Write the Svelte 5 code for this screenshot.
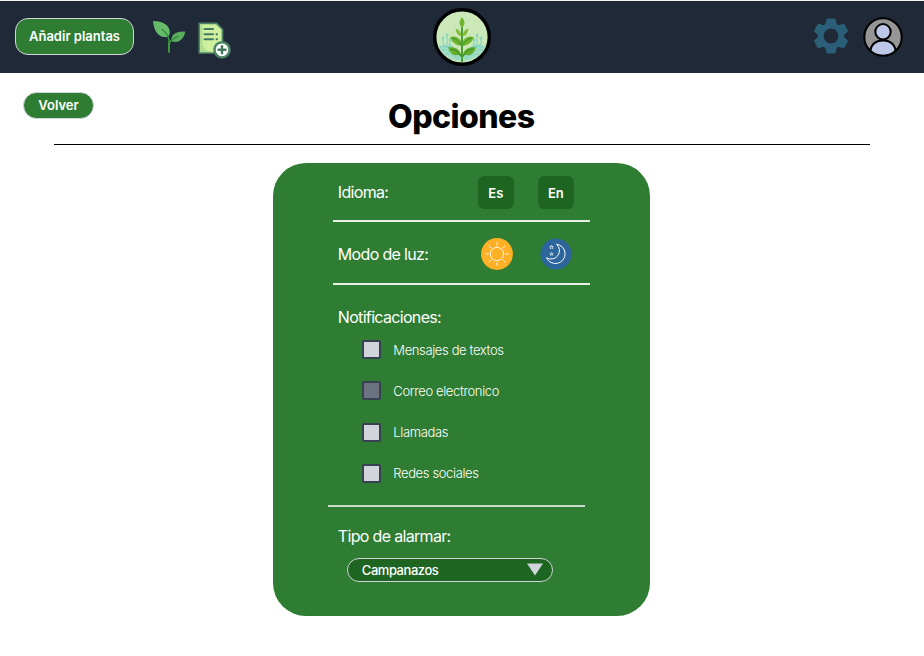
<script>
  let language = $state('es');
  let alarm = $state('Campanazos');
  let channels = $state([
    { name: 'Mensajes de textos', active: false },
    { name: 'Correo electronico', active: true },
    { name: 'Llamadas', active: false },
    { name: 'Redes sociales', active: false }
  ]);
  const rays = [0, 45, 90, 135, 180, 225, 270, 315];
  const teeth = [0, 60, 120, 180, 240, 300];
</script>

<div class="page">
  <header>
    <button class="add">Añadir plantas</button>
    <svg class="sprout" width="34" height="34" viewBox="152 20 34 34">
      <path d="M153 21C163 21 169.500 25 169.800 32Q170 35 167.500 37C160 38 154 33 153 21Z" fill="#66bb6a" />
      <path d="M171.500 41C171 35 175 31 185.300 31.500C184 39 179 43.500 172 41.500Z" fill="#5bad60" />
      <path d="M162 29.500Q168.500 34 169 41V52M169.200 45Q169 40 178 36.500" fill="none" stroke="#388e3c" stroke-width="1.500" stroke-linecap="round" />
      <path d="M169 43V52" stroke="#43a047" stroke-width="1.600" stroke-linecap="round" />
    </svg>
    <svg class="document" width="34" height="38" viewBox="198 22 34 38">
      <path d="M199.300 23.300H216.500L222.500 29.500V53H199.300Z" fill="#cff09e" stroke="#4d8465" stroke-width="1.700" stroke-linejoin="round" />
      <path d="M200.300 24.300H202.500V44Q203 50 211 52H200.300Z" fill="#aedb8d" />
      <path d="M204.500 29H213M204.500 34.300H213M204.500 39.300H213M216.500 34.300H217M216.500 39.300H217" stroke="#3f7863" stroke-width="2" stroke-linecap="round" />
      <circle cx="222" cy="49.800" r="7.600" fill="#fff" stroke="#4d8465" stroke-width="2.500" />
      <path d="M222 46.300V53.300M218.500 49.800H225.500" stroke="#427a60" stroke-width="2.500" stroke-linecap="round" />
    </svg>
    <svg class="logo" width="60" height="60" viewBox="0 0 60 60">
      <circle cx="30" cy="30" r="27.300" fill="#cce8b8" stroke="#000" stroke-width="3.400" />
      <path d="M6 39Q18 34 29 48L30 54Q12 53 6 39ZM54 39Q42 34 31 48L30 54Q48 53 54 39Z" fill="#a4ddc4" />
      <g fill="none" stroke="#64cbc0" stroke-width=".8">
        <path d="M11 32V37L23 44M15 29V37L26 46M18 34V38L27 45M49 32V37L37 44M45 29V37L34 46M42 34V38L33 45" />
        <path d="M8 40Q20 38 28 50M9 43Q20 42 27 52M14 47Q21 46 26 53M52 40Q40 38 32 50M51 43Q40 42 33 52M46 47Q39 46 34 53" stroke-dasharray="1.600 .7" />
        <circle cx="11" cy="31" r="1" /><circle cx="15" cy="28" r="1" /><circle cx="18" cy="33" r="1" />
        <circle cx="49" cy="31" r="1" /><circle cx="45" cy="28" r="1" /><circle cx="42" cy="33" r="1" />
      </g>
      <path d="M30 20V55" stroke="#44992c" stroke-width="1.900" />
      <path d="M30 10Q35 16 30 21Q25 16 30 10Z" fill="#70b62c" />
      <path d="M29.500 29.500Q24 28 23.500 21.500Q29 23 29.500 29.500ZM30.500 29.500Q36 28 36.500 21.500Q31 23 30.500 29.500Z" fill="#86bd36" />
      <path d="M29.500 38.500C25 39 20 36 18 30C25 28 30 32 29.500 38.500ZM30.500 38.500C35 39 40 36 42 30C35 28 30 32 30.500 38.500Z" fill="#70b62c" />
      <path d="M29.500 52C28 45 25 50 21 47.500Q18 46 16 40.500C24 39 30 43 29.500 52ZM30.500 52C32 45 35 50 39 47.500Q42 46 44 40.500C36 39 30 43 30.500 52Z" fill="#63ad27" />
      <path d="M20 31Q26 32 29.500 38.500M40 31Q34 32 30.500 38.500M19 42Q26 43 29.500 50M41 42Q34 43 30.500 50" fill="none" stroke="#328932" stroke-width="1" />
    </svg>
    <svg class="gear" width="36" height="36" viewBox="-18 -18 36 36">
      <g fill="#2b5f78">
        {#each teeth as angle}
          <path d="M-5.800-11L-4.600-16.500Q-4.400-17.400-3.400-17.400H3.400Q4.400-17.400 4.600-16.500L5.800-11Z" transform={`rotate(${angle})`} />
        {/each}
      </g>
      <circle r="10.300" fill="none" stroke="#2b5f78" stroke-width="5.800" />
    </svg>
    <svg class="avatar" width="40" height="40" viewBox="0 0 40 40">
      <defs><clipPath id="avatar-disc"><circle cx="20" cy="20" r="18.500" /></clipPath></defs>
      <circle cx="20" cy="20" r="18.500" fill="#969696" />
      <g clip-path="url(#avatar-disc)" fill="#bdc7e7" stroke="#000" stroke-width="2">
        <circle cx="20" cy="14.800" r="7.700" />
        <path d="M7 36Q8 23.500 20 23.500T33 36V42H7Z" />
      </g>
      <circle cx="20" cy="20" r="18.700" fill="none" stroke="#000" stroke-width="2" />
    </svg>
  </header>

  <div class="heading">
    <button class="back">Volver</button>
    <h1>Opciones</h1>
  </div>

  <main>
    <section class="language">
      <h2>Idioma:</h2>
      <button onclick={() => (language = 'es')} aria-pressed={language === 'es'}>Es</button>
      <button onclick={() => (language = 'en')} aria-pressed={language === 'en'}>En</button>
    </section>
    <section class="theme">
      <h2>Modo de luz:</h2>
      <svg width="32" height="32" viewBox="-16 -16 32 32">
        <circle r="15.900" fill="#ffb025" />
        <g fill="none" stroke="#fff" stroke-width=".9" stroke-linecap="round">
          <circle r="6.700" />
          {#each rays as angle}<path d="M0-8.700V-11.300" transform={`rotate(${angle})`} />{/each}
        </g>
      </svg>
      <svg width="32" height="32" viewBox="-16 -16 32 32">
        <circle r="15.500" fill="#2d659d" />
        <g fill="none" stroke="#fff" stroke-width="1" stroke-linejoin="round">
          <path d="M.5-9.800A9.700 9.700 0 1 1-9.500 3.700A8.420 8.420 0 0 0 .5-9.800Z" />
          <path d="M-4.500-8.800L-3.900-7.500-2.700-7.300-3.500-6.500-3.300-5.400-4.500-5.900-5.700-5.400-5.500-6.500-6.300-7.300-5.100-7.500ZM-4.500-1.600L-4-.6-3-.4-3.700.3-3.500 1.300-4.500.9-5.500 1.300-5.300.3-6-.4-5-.6Z" stroke-width=".7" />
        </g>
      </svg>
    </section>
    <section class="notifications">
      <h2>Notificaciones:</h2>
      <div class="channels">
        {#each channels as channel}
          <button class="channel" role="checkbox" aria-checked={channel.active} onclick={() => (channel.active = !channel.active)}>
            <span class="box" class:active={channel.active}></span>{channel.name}
          </button>
        {/each}
      </div>
    </section>
    <section class="alarm">
      <h2>Tipo de alarmar:</h2>
      <button class="select"><span>{alarm}</span><svg width="16" height="13" viewBox="0 0 16 13"><path d="M0 .5H16L8 12.500Z" fill="#d1d5db" /></svg></button>
    </section>
  </main>
</div>

<style>
  :global(body) { background: #fff; }
  .page { width: 924px; height: 656px; overflow: hidden; font-family: Inter, sans-serif; color: #fff; }
  * { box-sizing: border-box; }
  button { font: inherit; color: inherit; padding: 0; border: 0; white-space: nowrap; cursor: pointer; }
  svg { display: block; flex: none; }
  header { display: flex; align-items: flex-start; height: 73px; padding: 0 21px 0 15px; background: #1f2937; border-top: 1px solid #f3f6f7; }
  .add { width: 119px; height: 37px; margin-top: 17px; padding-bottom: 1px; border: 1px solid #d1d5db; border-radius: 13px; background: #2e7d32; font-size: 13px; font-weight: 600; }
  .sprout { margin: 19px 0 0 18px; }
  .document { margin: 21px 0 0 12px; }
  .logo { margin: 6px 0 0 199.500px; }
  .gear { margin: 17px 0 0 321.500px; }
  .avatar { margin: 15.500px 0 0 auto; }
  .heading { display: flex; width: 816px; height: 72px; margin-left: 54px; border-bottom: 1px solid #000; }
  .back { width: 71px; height: 27px; margin: 19px 0 0 -31px; padding-bottom: 1px; border: 1px solid #d1d5db; border-radius: 14px; background: #2e7d32; font-size: 13px; font-weight: 600; }
  h1 { margin: 24px 0 0 294px; color: #000; font-size: 32px; line-height: 39px; font-weight: 800; letter-spacing: -.55px; }
  main { width: 377px; height: 453px; margin: 17.500px 0 0 273.300px; padding-left: 60px; border-radius: 33px; background: #2e7d32; }
  h2 { flex: none; margin: 0; font-size: 16px; line-height: 20px; font-weight: 400; letter-spacing: -.67px; }
  section { width: 257px; padding-left: 4.500px; }
  .language, .theme { display: flex; align-items: center; border-bottom: 2px solid #e8f1e8; }
  .language { height: 59px; padding-top: 3px; }
  .language h2 { width: 140px; padding-bottom: 2px; }
  .language button { flex: none; width: 36px; height: 33px; margin-right: 24px; border-radius: 6px; background: #1e6522; font-size: 13px; font-weight: 600; }
  .theme { height: 63px; padding-top: 4px; }
  .theme h2 { width: 143px; }
  .theme svg + svg { margin-left: 27px; }
  .notifications { height: 222px; margin-left: -5px; padding: 22.500px 0 0 9.500px; border-bottom: 2px solid #c9dbca; }
  .channels { display: flex; flex-direction: column; gap: 21.300px; padding: 12.500px 0 0 24px; }
  .channel { display: flex; align-items: center; height: 20px; gap: 12.500px; background: none; font-size: 13px; font-weight: 300; letter-spacing: -.37px; }
  .box { width: 19px; height: 19px; border: 2px solid #374151; border-radius: 2px; background: #d1d5db; }
  .box.active { background: #6b7280; }
  .alarm { padding-top: 19px; }
  .select { display: flex; align-items: center; justify-content: space-between; width: 206px; height: 24px; margin: 12px 0 0 9px; padding: 0 9px 0 14px; border: 1px solid #d1d5db; border-radius: 12px; background: #1e6522; font-size: 13px; font-weight: 500; letter-spacing: -.45px; }
</style>
